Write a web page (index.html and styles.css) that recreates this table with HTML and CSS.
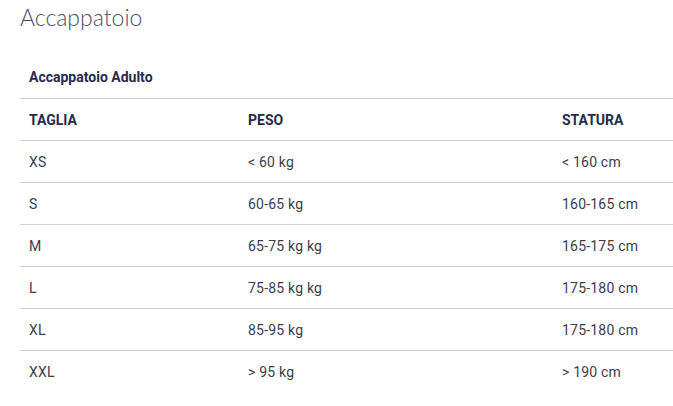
FILE: index.html
```html
<!DOCTYPE html>
<html lang="it">
<head>
<meta charset="utf-8">
<title>Accappatoio</title>
<link rel="stylesheet" href="styles.css">
</head>
<body>
<div class="page">
  <h1 class="title">Accappatoio</h1>
  <table class="sizes">
    <colgroup>
      <col class="c1">
      <col class="c2">
      <col class="c3">
    </colgroup>
    <thead>
      <tr class="caption-row"><th colspan="3">Accappatoio Adulto</th></tr>
      <tr class="head-row">
        <th>TAGLIA</th>
        <th>PESO</th>
        <th>STATURA</th>
      </tr>
    </thead>
    <tbody>
      <tr><td>XS</td><td>&lt; 60 kg</td><td>&lt; 160 cm</td></tr>
      <tr><td>S</td><td>60-65 kg</td><td>160-165 cm</td></tr>
      <tr><td>M</td><td>65-75 kg kg</td><td>165-175 cm</td></tr>
      <tr><td>L</td><td>75-85 kg kg</td><td>175-180 cm</td></tr>
      <tr><td>XL</td><td>85-95 kg</td><td>175-180 cm</td></tr>
      <tr><td>XXL</td><td>&gt; 95 kg</td><td>&gt; 190 cm</td></tr>
    </tbody>
  </table>
</div>
</body>
</html>
```

FILE: styles.css
```css
html, body {
  margin: 0;
  padding: 0;
  background: #ffffff;
}
.page {
  padding-left: 20px;
  font-family: Roboto, "Liberation Sans", sans-serif;
}
.title {
  margin: 0 0 22px 0;
  height: 34px;
  line-height: 34px;
  font-family: Lato, "Open Sans", sans-serif;
  font-weight: 300;
  font-size: 23px;
  color: #4b4d66;
}
.sizes {
  width: 653px;
  border-collapse: collapse;
  table-layout: fixed;
  font-size: 14px;
}
.c1 { width: 219px; }
.c2 { width: 314px; }
.c3 { width: 120px; }
.sizes th,
.sizes td {
  height: 41px;
  padding: 0 9px;
  text-align: left;
  vertical-align: middle;
  border-top: 1px solid #d2d2d6;
}
.sizes th {
  font-weight: 700;
  color: #262b4e;
}
.sizes td {
  font-weight: 400;
  color: #3c3d4a;
  letter-spacing: 0.2px;
}
.caption-row th {
  border-top: none;
  height: 42px;
}
```
